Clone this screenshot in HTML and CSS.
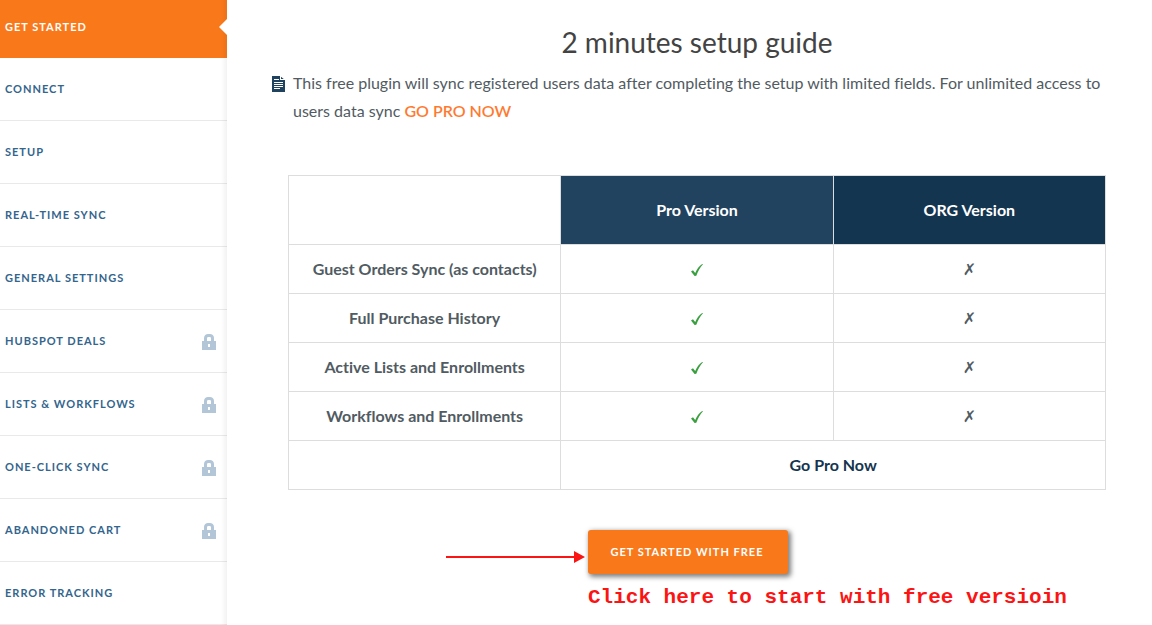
FILE: index.html
```html
<!DOCTYPE html>
<html lang="en">
<head>
<meta charset="utf-8">
<meta name="viewport" content="width=device-width, initial-scale=1">
<title>2 minutes setup guide</title>
<link rel="stylesheet" href="styles.css">
</head>
<body>
<svg class="sprite" aria-hidden="true">
  <symbol id="lock" viewBox="0 0 14 16">
    <path fill-rule="evenodd" d="M0 7h2V4C2 1.500 4 0 6 0h2c2 0 4 1.500 4 4v3h2v9H0zM5 7h4V4.500C9 3.500 8.500 3 7.500 3h-1C5.500 3 5 3.500 5 4.500zM6 10v3h2v-3z"/>
  </symbol>
  <symbol id="check" viewBox="0 0 14 14">
    <path d="M1 8.500l2-1.200 2.200 2.700C7 6 9 3 12.200 1l.8.300C10 4.500 8 8.500 6.300 12.700L4.600 13z"/>
  </symbol>
</svg>
<div class="layout">
  <nav class="sidebar">
    <a class="nav-item active" href="#start">GET STARTED</a>
    <a class="nav-item" href="#connect">CONNECT</a>
    <a class="nav-item" href="#setup">SETUP</a>
    <a class="nav-item" href="#sync">REAL-TIME SYNC</a>
    <a class="nav-item" href="#settings">GENERAL SETTINGS</a>
    <a class="nav-item" href="#deals">HUBSPOT DEALS<svg class="lock"><use href="#lock"/></svg></a>
    <a class="nav-item" href="#lists">LISTS &amp; WORKFLOWS<svg class="lock"><use href="#lock"/></svg></a>
    <a class="nav-item" href="#one-click">ONE-CLICK SYNC<svg class="lock"><use href="#lock"/></svg></a>
    <a class="nav-item" href="#cart">ABANDONED CART<svg class="lock"><use href="#lock"/></svg></a>
    <a class="nav-item" href="#errors">ERROR TRACKING</a>
  </nav>
  <main class="content">
    <h1 class="title">2 minutes setup guide</h1>
    <div class="intro">
      <svg class="doc-icon" viewBox="0 0 13 16" aria-hidden="true">
        <path fill="#1f425f" d="M0 0h8l5 4v12H0z"/>
        <path fill="#fff" d="M8 0h1v3h4v1H8z"/>
        <path stroke="#fff" d="M2 3.500h5M2 6.500h9M2 8.500h9M2 10.500h9M2 12.500h6"/>
      </svg>
      <p class="intro-text">This free plugin will sync registered users data after completing the setup with limited fields. For unlimited access to users data sync <a class="pro-link" href="#pro">GO PRO NOW</a></p>
    </div>
    <table class="compare">
      <thead>
        <tr><td></td><th class="pro" scope="col">Pro Version</th><th class="org" scope="col">ORG Version</th></tr>
      </thead>
      <tbody>
        <tr><th scope="row">Guest Orders Sync (as contacts)</th><td><svg class="check" role="img" aria-label="Yes"><use href="#check"/></svg></td><td class="no">✗</td></tr>
        <tr><th scope="row">Full Purchase History</th><td><svg class="check" role="img" aria-label="Yes"><use href="#check"/></svg></td><td class="no">✗</td></tr>
        <tr><th scope="row">Active Lists and Enrollments</th><td><svg class="check" role="img" aria-label="Yes"><use href="#check"/></svg></td><td class="no">✗</td></tr>
        <tr><th scope="row">Workflows and Enrollments</th><td><svg class="check" role="img" aria-label="Yes"><use href="#check"/></svg></td><td class="no">✗</td></tr>
        <tr><td></td><td colspan="2"><a class="table-link" href="#pro">Go Pro Now</a></td></tr>
      </tbody>
    </table>
    <div class="action">
      <svg class="arrow" viewBox="0 0 140 12" aria-hidden="true">
        <path fill="#fb1414" d="M0 5h128V0l11 6-11 6V7H0z"/>
      </svg>
      <button class="start" type="button">GET STARTED WITH FREE</button>
      <p class="note">Click here to start with free versioin</p>
    </div>
  </main>
</div>
</body>
</html>
```
FILE: styles.css
```css
* {
  box-sizing: border-box;
}

body {
  margin: 0;
  background: #fff;
  color: #515b62;
  font-family: Lato, "Liberation Sans", sans-serif;
  font-size: 16px;
  font-variant-ligatures: none;
}

a {
  text-decoration: none;
}

.sprite {
  display: none;
}

.layout {
  display: flex;
  align-items: flex-start;
}

.sidebar {
  flex: 0 0 227px;
  position: relative;
}

.sidebar::after {
  content: "";
  position: absolute;
  inset: 0 0 0 auto;
  width: 6px;
  background: linear-gradient(to right, rgba(0, 0, 0, 0), rgba(0, 0, 0, 0.05));
}

.nav-item {
  display: flex;
  align-items: center;
  justify-content: space-between;
  height: 63px;
  padding: 0 11px 2px 5px;
  border-bottom: 1px solid #e9e9e9;
  color: #33658d;
  font-size: 11px;
  font-weight: 700;
  letter-spacing: 1px;
}

.nav-item.active {
  position: relative;
  height: 58px;
  padding-bottom: 6px;
  border-bottom: 0;
  background: #f97819;
  color: #fff;
}

.nav-item.active::after {
  content: "";
  position: absolute;
  z-index: 1;
  top: 19px;
  right: 0;
  border: 8px solid transparent;
  border-left: 0;
  border-right-color: #fff;
}

.lock {
  width: 14px;
  height: 16px;
  margin-top: 4px;
  fill: #b3c6d8;
}

.content {
  flex: 1;
  min-width: 0;
  padding: 24px 46px 16px 61px;
}

.title {
  margin: 0;
  color: #434343;
  font-size: 28px;
  font-weight: 400;
  line-height: 36px;
  text-align: center;
}

.intro {
  display: flex;
  gap: 8px;
  margin: 9px 0 50px -16px;
}

.doc-icon {
  flex: none;
  width: 13px;
  height: 16px;
  margin-top: 7px;
}

.intro-text {
  margin: 0;
  line-height: 28px;
}

.pro-link {
  color: #ff7a2f;
  font-weight: 600;
}

.compare {
  width: 100%;
  table-layout: fixed;
  border-collapse: collapse;
  text-align: center;
}

.compare td,
.compare th {
  height: 49px;
  padding: 0 0 2px;
  border: 1px solid #ddd;
  font-weight: 700;
}

.compare thead td,
.compare thead th {
  height: 69px;
}

.compare .pro,
.compare .org {
  color: #fff;
}

.compare .pro {
  background: #21435f;
}

.compare .org {
  background: #14354f;
}

.compare .no {
  padding: 0;
  font-family: "DejaVu Sans", sans-serif;
  font-weight: 400;
}

.check {
  width: 14px;
  height: 14px;
  vertical-align: middle;
  fill: #3a9f3f;
}

.table-link {
  color: #14354f;
}

.action {
  display: grid;
  grid-template-columns: 140px 1fr;
  column-gap: 2px;
  margin: 40px 0 0 158px;
}

.arrow {
  width: 140px;
  height: 12px;
  margin-top: 21px;
}

.start {
  justify-self: start;
  width: 200px;
  height: 44px;
  padding: 0 2px 2px 0;
  border: 0;
  border-radius: 3px;
  background: #f97819;
  box-shadow: 2px 2px 5px 1px rgba(0, 0, 0, 0.5);
  color: #fff;
  font: 700 11px Lato, sans-serif;
  letter-spacing: 1px;
}

.note {
  grid-column: 2;
  margin: 12px 0 0;
  color: #fb1414;
  font: 700 21px/24px "Liberation Mono", monospace;
  white-space: nowrap;
}
```
